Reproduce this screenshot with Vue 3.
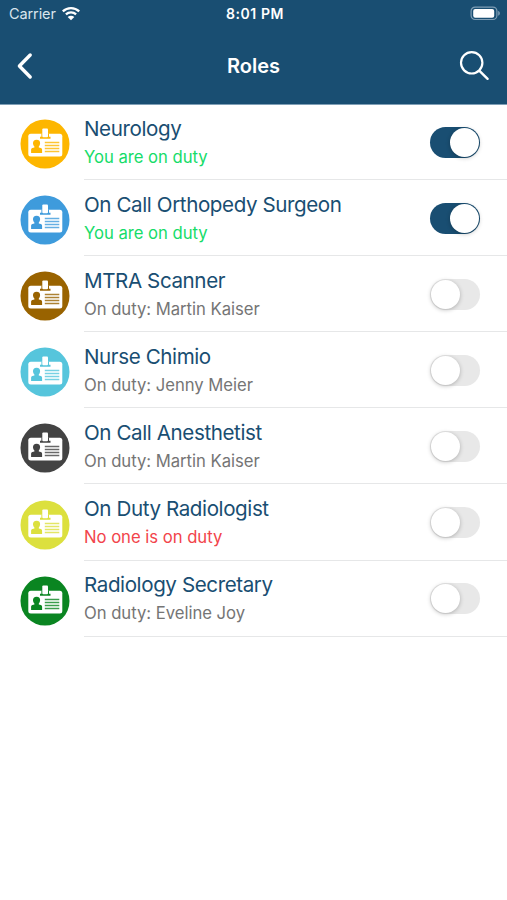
<template>
  <div class="screen">
    <header class="header">
      <div class="status-bar">
        <div class="status-bar__side">
          <span class="carrier">Carrier</span>
          <svg class="wifi" width="20" height="15" viewBox="0 0 20 15">
            <path d="M1.8 5.4C6.4 1 13.6 1 18.2 5.4M4.9 8.3c2.9-2.7 7.3-2.7 10.2 0" />
            <path class="wifi__dot" d="M10 14.2 6.7 10.9c1.9-1.7 4.7-1.7 6.6 0z" />
          </svg>
        </div>
        <span class="clock">8:01 PM</span>
        <div class="status-bar__side status-bar__side--right">
          <svg width="31" height="15" viewBox="0 0 31 15">
            <rect class="battery__case" x="1.1" y="1.1" width="25.8" height="12.4" rx="4" />
            <rect x="3.2" y="3" width="21" height="8.8" rx="2" fill="#fff" />
            <path d="M28.2 5c2.2.7 2.2 4 0 4.7z" fill="#7f9eb5" />
          </svg>
        </div>
      </div>
      <nav class="nav-bar">
        <button class="nav-bar__button" type="button" aria-label="Back">
          <svg width="18" height="28" viewBox="0 0 18 28">
            <path d="M14.2 3 3.4 14l10.8 11" stroke-width="3.4" />
          </svg>
        </button>
        <h1 class="nav-bar__title">Roles</h1>
        <button class="nav-bar__button" type="button" aria-label="Search">
          <svg width="32" height="32" viewBox="0 0 32 32">
            <circle cx="12.7" cy="12.8" r="10.7" stroke-width="2.2" />
            <path d="M20.5 20.8l8.1 8" stroke-width="2.4" />
          </svg>
        </button>
      </nav>
    </header>

    <ul class="roles">
      <li v-for="role in roles" :key="role.name" class="role">
        <svg class="role__badge" width="50" height="50" viewBox="0 0 50 50" :style="{ color: role.color }">
          <circle cx="25" cy="25" r="24.5" fill="currentColor" />
          <rect x="8.3" y="14.8" width="34" height="22.8" rx="2.5" fill="#fff" />
          <path d="M21.400 14.500h7.600v3.300h1.500v1.900H20v-1.900h1.400z" fill="currentColor" />
          <rect x="22.300" y="9.600" width="5.700" height="8.600" rx="1" fill="#fff" />
          <path
            d="M16.600 20.700c2.400 0 3.800 1.600 3.500 3.800-.2 1.600-.9 2.400-1.300 3.100v.8l2 .6c.9.400 1.300 1.100 1.300 2V34H11.100v-3c0-.9.400-1.600 1.300-2l2-.6v-.8c-.5-.7-1.200-1.500-1.400-3.100-.2-2.200 1.200-3.800 3.600-3.800z"
            fill="currentColor"
          />
          <path class="role__lines" d="M24.800 23.500h14.500M24.800 26.500h14.500M24.800 29.500h14.500M24.800 32.500h14.500" />
        </svg>
        <div class="role__body">
          <div class="role__text">
            <h2 class="role__name">{{ role.name }}</h2>
            <p class="role__status" :class="`role__status--${role.state}`">{{ role.status }}</p>
          </div>
          <button
            class="switch"
            :class="{ 'switch--on': role.active }"
            type="button"
            role="switch"
            :aria-checked="role.active"
            @click="role.active = !role.active"
          >
            <span class="switch__knob"></span>
          </button>
        </div>
      </li>
    </ul>
  </div>
</template>

<script setup>
import { ref } from 'vue'

const roles = ref([
  { name: 'Neurology', status: 'You are on duty', state: 'self', color: '#fdb600', active: true },
  { name: 'On Call Orthopedy Surgeon', status: 'You are on duty', state: 'self', color: '#3e9bdc', active: true },
  { name: 'MTRA Scanner', status: 'On duty: Martin Kaiser', state: 'other', color: '#996300', active: false },
  { name: 'Nurse Chimio', status: 'On duty: Jenny Meier', state: 'other', color: '#56c5dc', active: false },
  { name: 'On Call Anesthetist', status: 'On duty: Martin Kaiser', state: 'other', color: '#434343', active: false },
  { name: 'On Duty Radiologist', status: 'No one is on duty', state: 'nobody', color: '#dce03e', active: false },
  { name: 'Radiology Secretary', status: 'On duty: Eveline Joy', state: 'other', color: '#0a8521', active: false },
])
</script>

<style>
body {
  background: #fff;
}
</style>

<style scoped>
.screen {
  min-height: 900px;
  background: #fff;
  font-family: Inter, 'Liberation Sans', sans-serif;
}

.header {
  height: 105px;
  margin-bottom: -1px;
  background: #194e72;
  border-bottom: 1px solid #7f9fb6;
  box-sizing: border-box;
  color: #fff;
}

.status-bar {
  display: flex;
  align-items: center;
  height: 27px;
  padding: 0 6px 0 9px;
}

.status-bar__side {
  display: flex;
  flex: 1;
  align-items: center;
  gap: 5px;
}

.status-bar__side--right {
  justify-content: flex-end;
}

.carrier {
  font-size: 14.5px;
  letter-spacing: -0.1px;
  color: #d9e5ed;
}

.wifi {
  fill: none;
  stroke: #fff;
  stroke-width: 2.3;
}

.wifi__dot {
  fill: #fff;
  stroke: none;
}

.clock {
  font-size: 14px;
  font-weight: 600;
  letter-spacing: 0.55px;
}

.battery__case {
  fill: none;
  stroke: #7f9eb5;
  stroke-width: 1.2;
}

.nav-bar {
  display: flex;
  align-items: center;
  justify-content: space-between;
  height: 77px;
  padding: 0 16px;
}

.nav-bar__button {
  display: flex;
  width: 32px;
  padding: 0;
  border: none;
  background: none;
}

.nav-bar__button svg {
  fill: none;
  stroke: #fff;
  stroke-linecap: round;
  stroke-linejoin: round;
}

.nav-bar__title {
  margin: 0;
  font-size: 20px;
  font-weight: 600;
}

.roles {
  margin: 0;
  padding: 0;
  list-style: none;
}

.role {
  display: flex;
  align-items: center;
  height: 76.1px;
  padding-left: 20px;
}

.role__badge {
  flex: none;
  margin: 4px 14px 0 0;
}

.role__lines {
  fill: none;
  stroke: currentColor;
  stroke-width: 1.3;
  opacity: 0.8;
}

.role__body {
  display: flex;
  flex: 1;
  align-items: center;
  justify-content: space-between;
  height: 100%;
  padding: 1px 27px 0 0;
  border-bottom: 1px solid #e6e7e8;
  box-sizing: border-box;
}

.role__text {
  padding-top: 1px;
}

.role__name {
  margin: 0;
  font-size: 20.6px;
  font-weight: 400;
  line-height: 28px;
  letter-spacing: -0.41px;
  color: #194e72;
}

.role__status {
  margin: 0;
  font-size: 16.7px;
  line-height: 28px;
  letter-spacing: -0.04px;
}

.role__status--self {
  color: #16dc69;
}

.role__status--other {
  color: #757575;
}

.role__status--nobody {
  color: #f2444b;
}

.switch {
  display: flex;
  width: 50px;
  height: 31px;
  padding: 1px 1.3px;
  border: none;
  border-radius: 16px;
  background: #e8e8e8;
}

.switch--on {
  justify-content: flex-end;
  background: #194e72;
}

.switch__knob {
  width: 29px;
  height: 29px;
  border-radius: 50%;
  background: #fff;
  box-shadow: 0 1px 4px rgba(0, 0, 0, 0.25);
}
</style>
